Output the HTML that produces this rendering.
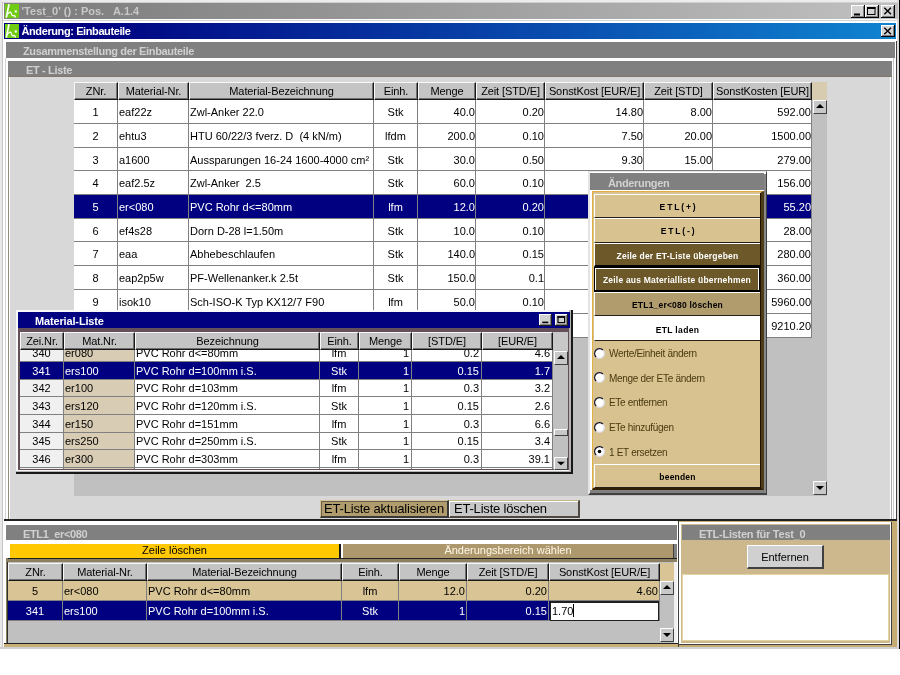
<!DOCTYPE html>
<html lang="de"><head><meta charset="utf-8"><title>Änderung: Einbauteile</title>
<style>
html,body{margin:0;padding:0;background:#fff;}
body{width:900px;height:675px;position:relative;overflow:hidden;font-family:"Liberation Sans",sans-serif;font-size:12px;color:#000;}
div{position:absolute;box-sizing:border-box;white-space:nowrap;overflow:hidden;}
.hd{background:#c4c4c4;border-top:1px solid #f8f8f8;border-left:1px solid #f8f8f8;border-right:1px solid #181818;border-bottom:1px solid #181818;box-shadow:inset -1px -1px 0 #707070;text-align:center;line-height:16px;font-size:11px;letter-spacing:-0.1px;}
.c{font-size:11px;line-height:22px;border-right:1px solid #808080;border-bottom:1px solid #808080;background:#fff;padding:0 1px;}
.r{text-align:right;padding-right:0;}
.m{text-align:center;}
.p1{padding-right:1px;}
.p2{padding-right:2px;}
.sel{background:#000080;color:#fff;}
.ph{background:#808080;color:#d0d0d0;font-weight:bold;font-size:11px;letter-spacing:-0.35px;line-height:19px;}
.sb{background:#c8c8c8;border-top:1px solid #fff;border-left:1px solid #fff;border-right:1px solid #404040;border-bottom:1px solid #404040;}
.btn{font-weight:bold;font-size:8.5px;letter-spacing:0.2px;text-align:center;}
.rl{font-size:10px;letter-spacing:-0.3px;color:#4a3a10;line-height:14px;}
.rad{border-radius:50%;background:#fff;border:1px solid #606060;box-shadow:inset 1px 1px 0 #404040;}
</style></head>
<body>
<div id="app" style="left:0;top:0;width:900px;height:675px;will-change:transform;">
<div style="left:0px;top:0px;width:900px;height:649px;background:#fff;"></div>
<div style="left:0px;top:0px;width:900px;height:2px;background:#ececec;"></div>
<div style="left:0px;top:2px;width:900px;height:1px;background:#d0d0d0;"></div>
<div style="left:0px;top:0px;width:2px;height:649px;background:#e8e8e8;"></div>
<div style="left:2px;top:2px;width:1px;height:647px;background:#c4c4c4;"></div>
<div style="left:897px;top:0px;width:2px;height:649px;background:#dcdcdc;"></div>
<div style="left:899px;top:0px;width:1px;height:649px;background:#000;"></div>
<div style="left:3px;top:20px;width:894px;height:1px;background:#d4d4d4;"></div>
<div style="left:0px;top:647px;width:899px;height:2px;background:#d0d0d0;"></div>
<div style="left:4px;top:3px;width:894px;height:16px;background:linear-gradient(90deg,#808080 0%,#808080 8%,#c0c0c0 100%);"></div>
<div style="left:21.5px;top:3px;width:400px;height:16px;color:#c8c8c8;font-weight:bold;font-size:11px;white-space:pre;line-height:16px;">'Test_0' () : Pos.   A.1.4</div>
<div style="left:4px;top:23px;width:892px;height:16px;background:linear-gradient(90deg,#000080 0%,#000080 8%,#1084d0 100%);"></div>
<div style="left:21.5px;top:23px;width:400px;height:16px;color:#fff;font-weight:bold;font-size:11px;letter-spacing:-0.4px;line-height:16px;">Änderung: Einbauteile</div>
<div style="left:5px;top:4px;width:14px;height:14px;"><svg width="14" height="14" viewBox="0 0 14 14" style="display:block"><rect width="14" height="14" fill="#70cc10"/><path d="M4 0.2 L1.3 13.6" stroke="#fff" stroke-width="1.7" fill="none"/><path d="M2.3 10.4 L4.4 8.3 Q5.9 7.8 6.4 9.6 Q6.8 11.8 8.2 11.9 Q10.2 10.8 10.4 13.6" stroke="#fff" stroke-width="1.3" fill="none"/><rect x="9.7" y="6.4" width="2.1" height="2.1" fill="#fff"/></svg></div>
<div style="left:5px;top:24px;width:14px;height:14px;"><svg width="14" height="14" viewBox="0 0 14 14" style="display:block"><rect width="14" height="14" fill="#70cc10"/><path d="M4 0.2 L1.3 13.6" stroke="#fff" stroke-width="1.7" fill="none"/><path d="M2.3 10.4 L4.4 8.3 Q5.9 7.8 6.4 9.6 Q6.8 11.8 8.2 11.9 Q10.2 10.8 10.4 13.6" stroke="#fff" stroke-width="1.3" fill="none"/><rect x="9.7" y="6.4" width="2.1" height="2.1" fill="#fff"/></svg></div>
<svg style="position:absolute;left:851px;top:5px" width="14" height="13" viewBox="0 0 14 13"><rect width="14" height="13" fill="#000"/><rect width="13" height="12" fill="#fff"/><rect x="1" y="1" width="12" height="11" fill="#808080"/><rect x="1" y="1" width="11" height="10" fill="#d4d4d4"/><rect x="3" y="8.5" width="6" height="2" fill="#000"/></svg>
<svg style="position:absolute;left:865px;top:5px" width="14" height="13" viewBox="0 0 14 13"><rect width="14" height="13" fill="#000"/><rect width="13" height="12" fill="#fff"/><rect x="1" y="1" width="12" height="11" fill="#808080"/><rect x="1" y="1" width="11" height="10" fill="#d4d4d4"/><rect x="2.5" y="2.5" width="7.5" height="7" fill="none" stroke="#000"/><rect x="2" y="2" width="8.5" height="2" fill="#000"/></svg>
<svg style="position:absolute;left:881px;top:5px" width="14" height="13" viewBox="0 0 14 13"><rect width="14" height="13" fill="#000"/><rect width="13" height="12" fill="#fff"/><rect x="1" y="1" width="12" height="11" fill="#808080"/><rect x="1" y="1" width="11" height="10" fill="#d4d4d4"/><path d="M3.3 2.8 L10 9.2 M10 2.8 L3.3 9.2" stroke="#000" stroke-width="1.4"/></svg>
<svg style="position:absolute;left:881px;top:25px" width="14" height="12" viewBox="0 0 14 12"><rect width="14" height="12" fill="#000"/><rect width="13" height="11" fill="#fff"/><rect x="1" y="1" width="12" height="10" fill="#808080"/><rect x="1" y="1" width="11" height="9" fill="#d4d4d4"/><path d="M3.3 2.8 L10 9.2 M10 2.8 L3.3 9.2" stroke="#000" stroke-width="1.4"/></svg>
<div style="left:896px;top:41px;width:1px;height:479px;background:#404040;"></div>
<div class="ph" style="left:6px;top:42px;width:889px;height:16px;padding-left:17px;">Zusammenstellung der Einbauteile</div>
<div style="left:5px;top:58px;width:1px;height:461px;background:#d4d4d4;"></div>
<div style="left:8px;top:61px;width:884px;height:458px;background:#d8d8d8;border-left:1px solid #908c78;border-right:1px solid #a8a8a8;box-shadow:inset 1px 0 0 #fff, inset -1px 0 0 #fff;"></div>
<div class="ph" style="left:8px;top:61px;width:884px;height:16px;padding-left:18px;border-bottom:1px solid #807868;line-height:18px;">ET - Liste</div>
<div style="left:893px;top:58px;width:1px;height:461px;background:#c8c8c8;"></div>
<div style="left:74px;top:82px;width:753px;height:414px;background:#c0c0c0;"></div>
<div class="hd" style="left:74px;top:82px;width:44px;height:18px;">ZNr.</div>
<div class="hd" style="left:118px;top:82px;width:71px;height:18px;">Material-Nr.</div>
<div class="hd" style="left:189px;top:82px;width:185px;height:18px;">Material-Bezeichnung</div>
<div class="hd" style="left:374px;top:82px;width:44px;height:18px;">Einh.</div>
<div class="hd" style="left:418px;top:82px;width:58px;height:18px;">Menge</div>
<div class="hd" style="left:476px;top:82px;width:69px;height:18px;">Zeit [STD/E]</div>
<div class="hd" style="left:545px;top:82px;width:99px;height:18px;">SonstKost [EUR/E]</div>
<div class="hd" style="left:644px;top:82px;width:69px;height:18px;">Zeit [STD]</div>
<div class="hd" style="left:713px;top:82px;width:99px;height:18px;">SonstKosten [EUR]</div>
<div style="left:812px;top:82px;width:15px;height:18px;background:#d8ccb0;"></div>
<div class="c m" style="left:74px;top:100px;width:44px;height:24px;line-height:25px;">1</div>
<div class="c " style="left:118px;top:100px;width:71px;height:24px;line-height:25px;">eaf22z</div>
<div class="c " style="left:189px;top:100px;width:185px;height:24px;line-height:25px;">Zwl-Anker 22.0</div>
<div class="c m" style="left:374px;top:100px;width:44px;height:24px;line-height:25px;">Stk</div>
<div class="c r" style="left:418px;top:100px;width:58px;height:24px;line-height:25px;">40.0</div>
<div class="c r" style="left:476px;top:100px;width:69px;height:24px;line-height:25px;">0.20</div>
<div class="c r" style="left:545px;top:100px;width:99px;height:24px;line-height:25px;">14.80</div>
<div class="c r" style="left:644px;top:100px;width:69px;height:24px;line-height:25px;">8.00</div>
<div class="c r" style="left:713px;top:100px;width:99px;height:24px;line-height:25px;">592.00</div>
<div class="c m" style="left:74px;top:124px;width:44px;height:24px;line-height:25px;">2</div>
<div class="c " style="left:118px;top:124px;width:71px;height:24px;line-height:25px;">ehtu3</div>
<div class="c " style="left:189px;top:124px;width:185px;height:24px;line-height:25px;">HTU 60/22/3 fverz. D&nbsp; (4 kN/m)</div>
<div class="c m" style="left:374px;top:124px;width:44px;height:24px;line-height:25px;">lfdm</div>
<div class="c r" style="left:418px;top:124px;width:58px;height:24px;line-height:25px;">200.0</div>
<div class="c r" style="left:476px;top:124px;width:69px;height:24px;line-height:25px;">0.10</div>
<div class="c r" style="left:545px;top:124px;width:99px;height:24px;line-height:25px;">7.50</div>
<div class="c r" style="left:644px;top:124px;width:69px;height:24px;line-height:25px;">20.00</div>
<div class="c r" style="left:713px;top:124px;width:99px;height:24px;line-height:25px;">1500.00</div>
<div class="c m" style="left:74px;top:148px;width:44px;height:23px;line-height:24px;">3</div>
<div class="c " style="left:118px;top:148px;width:71px;height:23px;line-height:24px;">a1600</div>
<div class="c " style="left:189px;top:148px;width:185px;height:23px;line-height:24px;">Aussparungen 16-24 1600-4000 cm²</div>
<div class="c m" style="left:374px;top:148px;width:44px;height:23px;line-height:24px;">Stk</div>
<div class="c r" style="left:418px;top:148px;width:58px;height:23px;line-height:24px;">30.0</div>
<div class="c r" style="left:476px;top:148px;width:69px;height:23px;line-height:24px;">0.50</div>
<div class="c r" style="left:545px;top:148px;width:99px;height:23px;line-height:24px;">9.30</div>
<div class="c r" style="left:644px;top:148px;width:69px;height:23px;line-height:24px;">15.00</div>
<div class="c r" style="left:713px;top:148px;width:99px;height:23px;line-height:24px;">279.00</div>
<div class="c m" style="left:74px;top:171px;width:44px;height:24px;line-height:25px;">4</div>
<div class="c " style="left:118px;top:171px;width:71px;height:24px;line-height:25px;">eaf2.5z</div>
<div class="c " style="left:189px;top:171px;width:185px;height:24px;line-height:25px;">Zwl-Anker&nbsp; 2.5</div>
<div class="c m" style="left:374px;top:171px;width:44px;height:24px;line-height:25px;">Stk</div>
<div class="c r" style="left:418px;top:171px;width:58px;height:24px;line-height:25px;">60.0</div>
<div class="c r" style="left:476px;top:171px;width:69px;height:24px;line-height:25px;">0.10</div>
<div class="c r" style="left:545px;top:171px;width:99px;height:24px;line-height:25px;"></div>
<div class="c r" style="left:644px;top:171px;width:69px;height:24px;line-height:25px;"></div>
<div class="c r" style="left:713px;top:171px;width:99px;height:24px;line-height:25px;">156.00</div>
<div class="c m sel" style="left:74px;top:195px;width:44px;height:24px;line-height:25px;">5</div>
<div class="c  sel" style="left:118px;top:195px;width:71px;height:24px;line-height:25px;">er&lt;080</div>
<div class="c  sel" style="left:189px;top:195px;width:185px;height:24px;line-height:25px;">PVC Rohr d&lt;=80mm</div>
<div class="c m sel" style="left:374px;top:195px;width:44px;height:24px;line-height:25px;">lfm</div>
<div class="c r sel" style="left:418px;top:195px;width:58px;height:24px;line-height:25px;">12.0</div>
<div class="c r sel" style="left:476px;top:195px;width:69px;height:24px;line-height:25px;">0.20</div>
<div class="c r sel" style="left:545px;top:195px;width:99px;height:24px;line-height:25px;"></div>
<div class="c r sel" style="left:644px;top:195px;width:69px;height:24px;line-height:25px;"></div>
<div class="c r sel" style="left:713px;top:195px;width:99px;height:24px;line-height:25px;">55.20</div>
<div class="c m" style="left:74px;top:219px;width:44px;height:23px;line-height:24px;">6</div>
<div class="c " style="left:118px;top:219px;width:71px;height:23px;line-height:24px;">ef4s28</div>
<div class="c " style="left:189px;top:219px;width:185px;height:23px;line-height:24px;">Dorn D-28 l=1.50m</div>
<div class="c m" style="left:374px;top:219px;width:44px;height:23px;line-height:24px;">Stk</div>
<div class="c r" style="left:418px;top:219px;width:58px;height:23px;line-height:24px;">10.0</div>
<div class="c r" style="left:476px;top:219px;width:69px;height:23px;line-height:24px;">0.10</div>
<div class="c r" style="left:545px;top:219px;width:99px;height:23px;line-height:24px;"></div>
<div class="c r" style="left:644px;top:219px;width:69px;height:23px;line-height:24px;"></div>
<div class="c r" style="left:713px;top:219px;width:99px;height:23px;line-height:24px;">28.00</div>
<div class="c m" style="left:74px;top:242px;width:44px;height:24px;line-height:25px;">7</div>
<div class="c " style="left:118px;top:242px;width:71px;height:24px;line-height:25px;">eaa</div>
<div class="c " style="left:189px;top:242px;width:185px;height:24px;line-height:25px;">Abhebeschlaufen</div>
<div class="c m" style="left:374px;top:242px;width:44px;height:24px;line-height:25px;">Stk</div>
<div class="c r" style="left:418px;top:242px;width:58px;height:24px;line-height:25px;">140.0</div>
<div class="c r" style="left:476px;top:242px;width:69px;height:24px;line-height:25px;">0.15</div>
<div class="c r" style="left:545px;top:242px;width:99px;height:24px;line-height:25px;"></div>
<div class="c r" style="left:644px;top:242px;width:69px;height:24px;line-height:25px;"></div>
<div class="c r" style="left:713px;top:242px;width:99px;height:24px;line-height:25px;">280.00</div>
<div class="c m" style="left:74px;top:266px;width:44px;height:24px;line-height:25px;">8</div>
<div class="c " style="left:118px;top:266px;width:71px;height:24px;line-height:25px;">eap2p5w</div>
<div class="c " style="left:189px;top:266px;width:185px;height:24px;line-height:25px;">PF-Wellenanker.k 2.5t</div>
<div class="c m" style="left:374px;top:266px;width:44px;height:24px;line-height:25px;">Stk</div>
<div class="c r" style="left:418px;top:266px;width:58px;height:24px;line-height:25px;">150.0</div>
<div class="c r" style="left:476px;top:266px;width:69px;height:24px;line-height:25px;">0.1</div>
<div class="c r" style="left:545px;top:266px;width:99px;height:24px;line-height:25px;"></div>
<div class="c r" style="left:644px;top:266px;width:69px;height:24px;line-height:25px;"></div>
<div class="c r" style="left:713px;top:266px;width:99px;height:24px;line-height:25px;">360.00</div>
<div class="c m" style="left:74px;top:290px;width:44px;height:24px;line-height:25px;">9</div>
<div class="c " style="left:118px;top:290px;width:71px;height:24px;line-height:25px;">isok10</div>
<div class="c " style="left:189px;top:290px;width:185px;height:24px;line-height:25px;">Sch-ISO-K Typ KX12/7 F90</div>
<div class="c m" style="left:374px;top:290px;width:44px;height:24px;line-height:25px;">lfm</div>
<div class="c r" style="left:418px;top:290px;width:58px;height:24px;line-height:25px;">50.0</div>
<div class="c r" style="left:476px;top:290px;width:69px;height:24px;line-height:25px;">0.10</div>
<div class="c r" style="left:545px;top:290px;width:99px;height:24px;line-height:25px;"></div>
<div class="c r" style="left:644px;top:290px;width:69px;height:24px;line-height:25px;"></div>
<div class="c r" style="left:713px;top:290px;width:99px;height:24px;line-height:25px;">5960.00</div>
<div class="c m" style="left:74px;top:314px;width:44px;height:24px;line-height:25px;"></div>
<div class="c " style="left:118px;top:314px;width:71px;height:24px;line-height:25px;"></div>
<div class="c " style="left:189px;top:314px;width:185px;height:24px;line-height:25px;"></div>
<div class="c m" style="left:374px;top:314px;width:44px;height:24px;line-height:25px;"></div>
<div class="c r" style="left:418px;top:314px;width:58px;height:24px;line-height:25px;"></div>
<div class="c r" style="left:476px;top:314px;width:69px;height:24px;line-height:25px;"></div>
<div class="c r" style="left:545px;top:314px;width:99px;height:24px;line-height:25px;"></div>
<div class="c r" style="left:644px;top:314px;width:69px;height:24px;line-height:25px;"></div>
<div class="c r" style="left:713px;top:314px;width:99px;height:24px;line-height:25px;">9210.20</div>
<div class="sb" style="left:813px;top:100px;width:14px;height:14px;"><svg width="12" height="12" viewBox="0 0 12 12" preserveAspectRatio="none" style="display:block"><path d="M2 7 L6 3 L10 7 Z" fill="#000"/></svg></div>
<div class="sb" style="left:813px;top:481px;width:14px;height:14px;"><svg width="12" height="12" viewBox="0 0 12 12" preserveAspectRatio="none" style="display:block"><path d="M2 4 L10 4 L6 8 Z" fill="#000"/></svg></div>
<div style="left:588px;top:171px;width:179px;height:324px;background:#fff;border-left:2px solid #e4e4e4;border-top:1px solid #e4e4e4;border-right:1px solid #404040;border-bottom:2px solid #404040;"></div>
<div style="left:590px;top:490px;width:176px;height:3px;background:#808080;"></div>
<div style="left:764px;top:174px;width:2px;height:319px;background:#888888;"></div>
<div class="ph" style="left:590px;top:173px;width:174px;height:17px;padding-left:18px;line-height:20px;">Änderungen</div>
<div style="left:592px;top:191px;width:172px;height:299px;border-left:1px solid #e0b040;border-top:1px solid #e0b040;border-right:3px solid #4c3c18;border-bottom:2px solid #302008;background:#d8c290;"></div>
<div style="left:760px;top:193px;width:1px;height:296px;background:#201000;"></div>
<div class="btn" style="left:594px;top:194px;width:166px;height:24px;background:#d8c290;color:#000;line-height:24px;border-top:1px solid #fff;border-left:1px solid #fff;border-bottom:1px solid #282018;letter-spacing:1.85px;padding-left:2px;">ETL(+)</div>
<div class="btn" style="left:594px;top:218px;width:166px;height:25px;background:#d8c290;color:#000;line-height:25px;border-top:1px solid #fff;border-left:1px solid #fff;border-bottom:1px solid #282018;letter-spacing:1.85px;padding-left:2px;">ETL(-)</div>
<div class="btn" style="left:594px;top:243px;width:166px;height:24px;background:#6c5828;color:#fff;line-height:24px;border-top:1px solid #fff;border-left:1px solid #fff;border-bottom:1px solid #282018;border-bottom:2px solid #000;line-height:24px;">Zeile der ET-Liste übergeben</div>
<div class="btn" style="left:594px;top:267px;width:166px;height:25px;background:#6c5828;color:#fff;line-height:25px;border-top:1px solid #fff;border-left:1px solid #fff;border-bottom:1px solid #282018;border:1px solid #000;border-bottom:2px solid #000;box-shadow:inset 1px 1px 0 #fff, inset -1px 0 0 #fff;line-height:25px;">Zeile aus Materialliste übernehmen</div>
<div class="btn" style="left:594px;top:292px;width:166px;height:24px;background:#b09c6c;color:#000;line-height:24px;border-top:1px solid #fff;border-left:1px solid #fff;border-bottom:1px solid #282018;">ETL1_er&lt;080 löschen</div>
<div class="btn" style="left:594px;top:316px;width:166px;height:25px;background:#ffffff;color:#000;line-height:25px;border-top:1px solid #fff;border-left:1px solid #fff;border-bottom:1px solid #282018;letter-spacing:0.35px;line-height:26px;">ETL laden</div>
<svg style="position:absolute;left:594px;top:347.8px" width="11" height="11" viewBox="0 0 11 11"><circle cx="5.5" cy="5.5" r="5" fill="#fff"/><path d="M2.1 8.9 A4.8 4.8 0 0 0 8.9 2.1" fill="none" stroke="#dcdce8" stroke-width="1.3"/><path d="M2.1 8.9 A4.8 4.8 0 0 1 8.9 2.1" fill="none" stroke="#181828" stroke-width="1.4"/></svg>
<div class="rl" style="left:609px;top:347px;width:150px;height:14px;">Werte/Einheit ändern</div>
<svg style="position:absolute;left:594px;top:372.4px" width="11" height="11" viewBox="0 0 11 11"><circle cx="5.5" cy="5.5" r="5" fill="#fff"/><path d="M2.1 8.9 A4.8 4.8 0 0 0 8.9 2.1" fill="none" stroke="#dcdce8" stroke-width="1.3"/><path d="M2.1 8.9 A4.8 4.8 0 0 1 8.9 2.1" fill="none" stroke="#181828" stroke-width="1.4"/></svg>
<div class="rl" style="left:609px;top:372px;width:150px;height:14px;">Menge der ETe ändern</div>
<svg style="position:absolute;left:594px;top:396.9px" width="11" height="11" viewBox="0 0 11 11"><circle cx="5.5" cy="5.5" r="5" fill="#fff"/><path d="M2.1 8.9 A4.8 4.8 0 0 0 8.9 2.1" fill="none" stroke="#dcdce8" stroke-width="1.3"/><path d="M2.1 8.9 A4.8 4.8 0 0 1 8.9 2.1" fill="none" stroke="#181828" stroke-width="1.4"/></svg>
<div class="rl" style="left:609px;top:396px;width:150px;height:14px;">ETe entfernen</div>
<svg style="position:absolute;left:594px;top:421.5px" width="11" height="11" viewBox="0 0 11 11"><circle cx="5.5" cy="5.5" r="5" fill="#fff"/><path d="M2.1 8.9 A4.8 4.8 0 0 0 8.9 2.1" fill="none" stroke="#dcdce8" stroke-width="1.3"/><path d="M2.1 8.9 A4.8 4.8 0 0 1 8.9 2.1" fill="none" stroke="#181828" stroke-width="1.4"/></svg>
<div class="rl" style="left:609px;top:421px;width:150px;height:14px;">ETe hinzufügen</div>
<svg style="position:absolute;left:594px;top:446.0px" width="11" height="11" viewBox="0 0 11 11"><circle cx="5.5" cy="5.5" r="5" fill="#fff"/><path d="M2.1 8.9 A4.8 4.8 0 0 0 8.9 2.1" fill="none" stroke="#dcdce8" stroke-width="1.3"/><path d="M2.1 8.9 A4.8 4.8 0 0 1 8.9 2.1" fill="none" stroke="#181828" stroke-width="1.4"/><circle cx="5.5" cy="5.5" r="1.8" fill="#000"/></svg>
<div class="rl" style="left:609px;top:446px;width:150px;height:14px;">1 ET ersetzen</div>
<div class="btn" style="left:594px;top:464px;width:166px;height:24px;background:#d8c290;color:#000;line-height:24px;border-top:1px solid #fff;border-left:1px solid #fff;border-bottom:1px solid #282018;letter-spacing:0.2px;">beenden</div>
<div style="left:16px;top:310px;width:557px;height:164px;background:#181818;"></div>
<div style="left:16px;top:310px;width:555px;height:162px;background:#b4b4b4;"></div>
<div style="left:16px;top:310px;width:553px;height:161px;background:#f8f8f8;"></div>
<div style="left:18px;top:312px;width:551px;height:158px;background:#645058;"></div>
<div style="left:18px;top:312px;width:552px;height:16px;background:#000080;color:#fff;font-weight:bold;font-size:11px;letter-spacing:-0.15px;line-height:18px;padding-left:17px;">Material-Liste</div>
<svg style="position:absolute;left:539px;top:314px" width="13" height="12" viewBox="0 0 13 12"><rect width="13" height="12" fill="#202020"/><rect width="12" height="11" fill="#fff"/><rect x="1" y="1" width="11" height="10" fill="#808080"/><rect x="1" y="1" width="10" height="9" fill="#d0d0d0"/><rect x="3.3" y="7.6" width="6" height="1.6" fill="#000"/></svg>
<svg style="position:absolute;left:555px;top:314px" width="13" height="12" viewBox="0 0 13 12"><rect width="13" height="12" fill="#202020"/><rect width="12" height="11" fill="#fff"/><rect x="1" y="1" width="11" height="10" fill="#808080"/><rect x="1" y="1" width="10" height="9" fill="#d0d0d0"/><rect x="3" y="2.8" width="6.6" height="5.8" fill="none" stroke="#000" stroke-width="1.2"/><rect x="2.4" y="2.2" width="7.8" height="1.6" fill="#000"/></svg>
<div style="left:20px;top:332px;width:548px;height:137px;background:#c0c0c0;"></div>
<div style="left:20px;top:349px;width:533px;height:120px;">
<div class="c m" style="left:0px;top:-4px;width:44px;height:17px;line-height:17px;background:#f0f0f0;">340</div>
<div class="c " style="left:44px;top:-4px;width:71px;height:17px;line-height:17px;background:#d8ccb4;">er080</div>
<div class="c " style="left:115px;top:-4px;width:185px;height:17px;line-height:17px;">PVC Rohr d&lt;=80mm</div>
<div class="c m" style="left:300px;top:-4px;width:39px;height:17px;line-height:17px;">lfm</div>
<div class="c r p2" style="left:339px;top:-4px;width:53px;height:17px;line-height:17px;">1</div>
<div class="c r p2" style="left:392px;top:-4px;width:70px;height:17px;line-height:17px;">0.2</div>
<div class="c r p2" style="left:462px;top:-4px;width:71px;height:17px;line-height:17px;">4.6</div>
<div class="c m sel" style="left:0px;top:13px;width:44px;height:18px;line-height:18px;">341</div>
<div class="c  sel" style="left:44px;top:13px;width:71px;height:18px;line-height:18px;">ers100</div>
<div class="c  sel" style="left:115px;top:13px;width:185px;height:18px;line-height:18px;">PVC Rohr d=100mm i.S.</div>
<div class="c m sel" style="left:300px;top:13px;width:39px;height:18px;line-height:18px;">Stk</div>
<div class="c r p2 sel" style="left:339px;top:13px;width:53px;height:18px;line-height:18px;">1</div>
<div class="c r p2 sel" style="left:392px;top:13px;width:70px;height:18px;line-height:18px;">0.15</div>
<div class="c r p2 sel" style="left:462px;top:13px;width:71px;height:18px;line-height:18px;">1.7</div>
<div class="c m" style="left:0px;top:31px;width:44px;height:17px;line-height:17px;background:#f0f0f0;">342</div>
<div class="c " style="left:44px;top:31px;width:71px;height:17px;line-height:17px;background:#d8ccb4;">er100</div>
<div class="c " style="left:115px;top:31px;width:185px;height:17px;line-height:17px;">PVC Rohr d=103mm</div>
<div class="c m" style="left:300px;top:31px;width:39px;height:17px;line-height:17px;">lfm</div>
<div class="c r p2" style="left:339px;top:31px;width:53px;height:17px;line-height:17px;">1</div>
<div class="c r p2" style="left:392px;top:31px;width:70px;height:17px;line-height:17px;">0.3</div>
<div class="c r p2" style="left:462px;top:31px;width:71px;height:17px;line-height:17px;">3.2</div>
<div class="c m" style="left:0px;top:48px;width:44px;height:18px;line-height:18px;background:#f0f0f0;">343</div>
<div class="c " style="left:44px;top:48px;width:71px;height:18px;line-height:18px;background:#d8ccb4;">ers120</div>
<div class="c " style="left:115px;top:48px;width:185px;height:18px;line-height:18px;">PVC Rohr d=120mm i.S.</div>
<div class="c m" style="left:300px;top:48px;width:39px;height:18px;line-height:18px;">Stk</div>
<div class="c r p2" style="left:339px;top:48px;width:53px;height:18px;line-height:18px;">1</div>
<div class="c r p2" style="left:392px;top:48px;width:70px;height:18px;line-height:18px;">0.15</div>
<div class="c r p2" style="left:462px;top:48px;width:71px;height:18px;line-height:18px;">2.6</div>
<div class="c m" style="left:0px;top:66px;width:44px;height:18px;line-height:18px;background:#f0f0f0;">344</div>
<div class="c " style="left:44px;top:66px;width:71px;height:18px;line-height:18px;background:#d8ccb4;">er150</div>
<div class="c " style="left:115px;top:66px;width:185px;height:18px;line-height:18px;">PVC Rohr d=151mm</div>
<div class="c m" style="left:300px;top:66px;width:39px;height:18px;line-height:18px;">lfm</div>
<div class="c r p2" style="left:339px;top:66px;width:53px;height:18px;line-height:18px;">1</div>
<div class="c r p2" style="left:392px;top:66px;width:70px;height:18px;line-height:18px;">0.3</div>
<div class="c r p2" style="left:462px;top:66px;width:71px;height:18px;line-height:18px;">6.6</div>
<div class="c m" style="left:0px;top:84px;width:44px;height:17px;line-height:17px;background:#f0f0f0;">345</div>
<div class="c " style="left:44px;top:84px;width:71px;height:17px;line-height:17px;background:#d8ccb4;">ers250</div>
<div class="c " style="left:115px;top:84px;width:185px;height:17px;line-height:17px;">PVC Rohr d=250mm i.S.</div>
<div class="c m" style="left:300px;top:84px;width:39px;height:17px;line-height:17px;">Stk</div>
<div class="c r p2" style="left:339px;top:84px;width:53px;height:17px;line-height:17px;">1</div>
<div class="c r p2" style="left:392px;top:84px;width:70px;height:17px;line-height:17px;">0.15</div>
<div class="c r p2" style="left:462px;top:84px;width:71px;height:17px;line-height:17px;">3.4</div>
<div class="c m" style="left:0px;top:101px;width:44px;height:18px;line-height:18px;background:#f0f0f0;">346</div>
<div class="c " style="left:44px;top:101px;width:71px;height:18px;line-height:18px;background:#d8ccb4;">er300</div>
<div class="c " style="left:115px;top:101px;width:185px;height:18px;line-height:18px;">PVC Rohr d=303mm</div>
<div class="c m" style="left:300px;top:101px;width:39px;height:18px;line-height:18px;">lfm</div>
<div class="c r p2" style="left:339px;top:101px;width:53px;height:18px;line-height:18px;">1</div>
<div class="c r p2" style="left:392px;top:101px;width:70px;height:18px;line-height:18px;">0.3</div>
<div class="c r p2" style="left:462px;top:101px;width:71px;height:18px;line-height:18px;">39.1</div>
<div class="c m" style="left:0px;top:119px;width:44px;height:17px;line-height:17px;background:#f0f0f0;"></div>
<div class="c " style="left:44px;top:119px;width:71px;height:17px;line-height:17px;background:#d8ccb4;"></div>
<div class="c " style="left:115px;top:119px;width:185px;height:17px;line-height:17px;"></div>
<div class="c m" style="left:300px;top:119px;width:39px;height:17px;line-height:17px;"></div>
<div class="c r p2" style="left:339px;top:119px;width:53px;height:17px;line-height:17px;"></div>
<div class="c r p2" style="left:392px;top:119px;width:70px;height:17px;line-height:17px;"></div>
<div class="c r p2" style="left:462px;top:119px;width:71px;height:17px;line-height:17px;"></div>
</div>
<div class="hd" style="left:20px;top:332px;width:44px;height:18px;">Zei.Nr.</div>
<div class="hd" style="left:64px;top:332px;width:71px;height:18px;">Mat.Nr.</div>
<div class="hd" style="left:135px;top:332px;width:185px;height:18px;">Bezeichnung</div>
<div class="hd" style="left:320px;top:332px;width:39px;height:18px;">Einh.</div>
<div class="hd" style="left:359px;top:332px;width:53px;height:18px;">Menge</div>
<div class="hd" style="left:412px;top:332px;width:70px;height:18px;">[STD/E]</div>
<div class="hd" style="left:482px;top:332px;width:71px;height:18px;">[EUR/E]</div>
<div style="left:553px;top:332px;width:15px;height:18px;background:#c8c8c8;"></div>
<div class="sb" style="left:554px;top:351px;width:14px;height:14px;"><svg width="12" height="12" viewBox="0 0 12 12" preserveAspectRatio="none" style="display:block"><path d="M2 7 L6 3 L10 7 Z" fill="#000"/></svg></div>
<div class="sb" style="left:554px;top:457px;width:14px;height:13px;"><svg width="12" height="11" viewBox="0 0 12 12" preserveAspectRatio="none" style="display:block"><path d="M2 4 L10 4 L6 8 Z" fill="#000"/></svg></div>
<div class="sb" style="left:554px;top:429px;width:14px;height:7px;"></div>
<div style="left:320px;top:500px;width:129px;height:18px;background:#b09c6c;border-top:1px solid #d8c494;border-left:1px solid #d8c494;border-right:2px solid #383838;border-bottom:2px solid #383838;box-shadow:inset 1px 1px 0 #686050;font-size:13px;letter-spacing:-0.2px;line-height:16px;text-align:center;">ET-Liste aktualisieren</div>
<div style="left:449px;top:500px;width:131px;height:18px;background:#c8c8c8;border-top:1px solid #c8b888;border-left:1px solid #fff;border-right:2px solid #504840;border-bottom:2px solid #504840;box-shadow:inset 0 1px 0 #fff;font-size:13px;letter-spacing:-0.2px;line-height:16px;padding-left:4px;">ET-Liste löschen</div>
<div style="left:4px;top:519px;width:893px;height:2px;background:#202020;"></div>
<div style="left:4px;top:521px;width:893px;height:126px;background:#c4ac74;"></div>
<div style="left:4px;top:521px;width:675px;height:126px;background:#fff;border-right:1px solid #383838;"></div>
<div class="ph" style="left:6px;top:525px;width:671px;height:15px;padding-left:17px;">ETL1_er&lt;080</div>
<div style="left:10px;top:544px;width:331px;height:14px;background:#ffc800;text-align:center;line-height:12px;font-size:11px;border-right:2px solid #181818;">Zeile löschen</div>
<div style="left:341px;top:544px;width:333px;height:14px;background:#ac986c;color:#fff8e8;text-align:center;line-height:13px;font-size:11px;border-right:1px solid #404040;border-left:2px solid #fff;">Änderungsbereich wählen</div>
<div style="left:674px;top:544px;width:3px;height:18px;background:#808080;"></div>
<div style="left:6px;top:558px;width:671px;height:89px;background:#8c8060;"></div>
<div style="left:8px;top:558px;width:669px;height:1px;background:#202020;"></div>
<div style="left:674px;top:562px;width:3px;height:81px;background:#f0f0f0;"></div>
<div style="left:4px;top:643px;width:674px;height:1px;background:#202020;"></div>
<div style="left:4px;top:644px;width:674px;height:3px;background:#c8b078;"></div>
<div style="left:7px;top:562px;width:1px;height:81px;background:#303030;"></div>
<div style="left:8px;top:562px;width:666px;height:81px;background:#c0c0c0;"></div>
<div class="hd" style="left:8px;top:563px;width:55px;height:18px;">ZNr.</div>
<div class="hd" style="left:63px;top:563px;width:84px;height:18px;">Material-Nr.</div>
<div class="hd" style="left:147px;top:563px;width:195px;height:18px;">Material-Bezeichnung</div>
<div class="hd" style="left:342px;top:563px;width:57px;height:18px;">Einh.</div>
<div class="hd" style="left:399px;top:563px;width:68px;height:18px;">Menge</div>
<div class="hd" style="left:467px;top:563px;width:82px;height:18px;">Zeit [STD/E]</div>
<div class="hd" style="left:549px;top:563px;width:111px;height:18px;">SonstKost [EUR/E]</div>
<div style="left:660px;top:563px;width:14px;height:18px;background:#d8c494;"></div>
<div class="c m" style="left:8px;top:581px;width:55px;height:20px;line-height:20px;background:#d8c494;">5</div>
<div class="c " style="left:63px;top:581px;width:84px;height:20px;line-height:20px;background:#d8c494;">er&lt;080</div>
<div class="c " style="left:147px;top:581px;width:195px;height:20px;line-height:20px;background:#d8c494;">PVC Rohr d&lt;=80mm</div>
<div class="c m" style="left:342px;top:581px;width:57px;height:20px;line-height:20px;background:#d8c494;">lfm</div>
<div class="c r p1" style="left:399px;top:581px;width:68px;height:20px;line-height:20px;background:#d8c494;">12.0</div>
<div class="c r p1" style="left:467px;top:581px;width:82px;height:20px;line-height:20px;background:#d8c494;">0.20</div>
<div class="c r p1" style="left:549px;top:581px;width:111px;height:20px;line-height:20px;background:#d8c494;">4.60</div>
<div class="c m sel" style="left:8px;top:601px;width:55px;height:20px;line-height:20px;">341</div>
<div class="c  sel" style="left:63px;top:601px;width:84px;height:20px;line-height:20px;">ers100</div>
<div class="c  sel" style="left:147px;top:601px;width:195px;height:20px;line-height:20px;">PVC Rohr d=100mm i.S.</div>
<div class="c m sel" style="left:342px;top:601px;width:57px;height:20px;line-height:20px;">Stk</div>
<div class="c r p1 sel" style="left:399px;top:601px;width:68px;height:20px;line-height:20px;">1</div>
<div class="c r p1 sel" style="left:467px;top:601px;width:82px;height:20px;line-height:20px;">0.15</div>
<div class="c r p1 sel" style="left:549px;top:601px;width:111px;height:20px;line-height:20px;"></div>
<div style="left:550px;top:601px;width:109px;height:20px;background:#fff;border:1px solid #202020;border-top:2px solid #202020;line-height:16px;font-size:11px;padding-left:1px;">1.70<span style="display:inline-block;width:1px;height:13px;background:#000;vertical-align:-2px"></span></div>
<div class="sb" style="left:660px;top:581px;width:14px;height:14px;"><svg width="12" height="12" viewBox="0 0 12 12" preserveAspectRatio="none" style="display:block"><path d="M2 7 L6 3 L10 7 Z" fill="#000"/></svg></div>
<div class="sb" style="left:660px;top:628px;width:14px;height:14px;"><svg width="12" height="12" viewBox="0 0 12 12" preserveAspectRatio="none" style="display:block"><path d="M2 4 L10 4 L6 8 Z" fill="#000"/></svg></div>
<div style="left:678px;top:522px;width:214px;height:123px;background:#ccb88c;border-left:1px solid #404040;border-right:1px solid #404040;border-bottom:1px solid #404040;box-shadow:inset 2px 2px 0 #fff, inset -1px -1px 0 #fff;"></div>
<div class="ph" style="left:682px;top:525px;width:208px;height:15px;padding-left:17px;letter-spacing:-0.25px;">ETL-Listen für Test_0</div>
<div style="left:747px;top:545px;width:77px;height:24px;background:#d0d0d0;border-top:1px solid #fff;border-left:1px solid #fff;border-right:2px solid #404040;border-bottom:2px solid #404040;text-align:center;line-height:22px;font-size:11px;">Entfernen</div>
<div style="left:682px;top:574px;width:207px;height:67px;background:#fff;border:1px solid #e4d4a0;"></div>
</div>
</body></html>
